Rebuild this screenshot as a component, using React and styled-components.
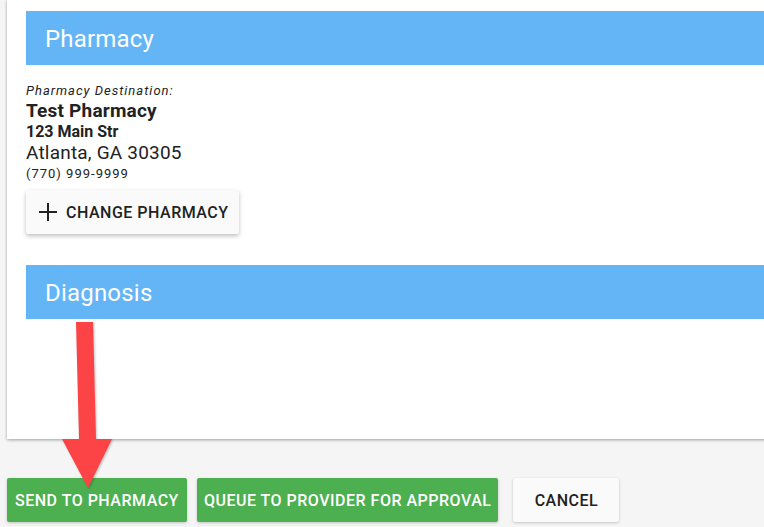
import styled, { createGlobalStyle } from "styled-components";

const GlobalStyle = createGlobalStyle`
  html, body {
    margin: 0;
    padding: 0;
    background: #f5f5f5;
    overflow: hidden;
    font-family: Roboto, "Liberation Sans", sans-serif;
  }
`;

export default function App() {
  return (
    <Page>
      <GlobalStyle />
      <Card>
        <SectionHeader>Pharmacy</SectionHeader>
        <Details>
          <Label>Pharmacy Destination:</Label>
          <Name>Test Pharmacy</Name>
          <Street>123 Main Str</Street>
          <City>Atlanta, GA 30305</City>
          <Phone>(770) 999-9999</Phone>
        </Details>
        <ChangeButton>
          <svg width="18" height="18" viewBox="0 0 18 18">
            <path d="M9 0v18M0 9h18" stroke="#222" strokeWidth="2" />
          </svg>
          Change Pharmacy
        </ChangeButton>
        <SectionHeader $spaced>Diagnosis</SectionHeader>
      </Card>
      <Actions>
        <ActionButton $primary $pad="8px">Send to Pharmacy</ActionButton>
        <ActionButton $primary>Queue to Provider for Approval</ActionButton>
        <ActionButton $gap="5px">Cancel</ActionButton>
      </Actions>
      <Arrow width="60" height="175" viewBox="0 0 60 175">
        <polygon
          points="14,0 31,0 34,117 50,117 26,166 0,117 17,117"
          fill="#fc4446"
        />
      </Arrow>
    </Page>
  );
}

const Page = styled.div`
  position: relative;
  width: 764px;
  height: 527px;
`;

const Card = styled.div`
  margin-left: 7px;
  width: 820px;
  height: 439px;
  box-sizing: border-box;
  padding: 11px 0 0 19px;
  background: #fff;
  box-shadow: 0 1px 3px rgba(0, 0, 0, 0.35);
`;

const SectionHeader = styled.div`
  height: 54px;
  box-sizing: border-box;
  margin-top: ${(p) => (p.$spaced ? "31px" : "0")};
  padding: 2px 0 0 19px;
  display: flex;
  align-items: center;
  background: #64b5f6;
  color: #fff;
  font-size: 24px;
  letter-spacing: 0.2px;
`;

const Details = styled.div`
  padding-top: 17px;
  color: #222;
`;

const Label = styled.div`
  font-size: 13px;
  font-style: italic;
  letter-spacing: 1px;
  line-height: 17px;
`;

const Name = styled.div`
  font-size: 19px;
  font-weight: 700;
  letter-spacing: 0.2px;
  line-height: 24px;
`;

const Street = styled.div`
  font-size: 16px;
  font-weight: 700;
  line-height: 18px;
`;

const City = styled.div`
  font-size: 19px;
  letter-spacing: 0.2px;
  line-height: 24px;
`;

const Phone = styled.div`
  font-size: 13px;
  letter-spacing: 1px;
  line-height: 18px;
`;

const ChangeButton = styled.button`
  margin-top: 7px;
  height: 44px;
  padding: 0 10px 0 13px;
  display: flex;
  align-items: center;
  gap: 9px;
  border: none;
  border-radius: 2px;
  background: #fafafa;
  box-shadow: 0 2px 4px rgba(0, 0, 0, 0.25);
  font-family: Roboto, "Liberation Sans", sans-serif;
  font-size: 16px;
  font-weight: 500;
  letter-spacing: 0.5px;
  text-transform: uppercase;
  color: #222;
`;

const Actions = styled.div`
  display: flex;
  gap: 10px;
  padding: 39px 0 0 7px;
`;

const ActionButton = styled.button`
  height: 44px;
  padding: 0 ${(p) => p.$pad || "7px"};
  margin-left: ${(p) => p.$gap || "0"};
  border: none;
  border-radius: 2px;
  background: ${(p) => (p.$primary ? "#4caf50" : "#fafafa")};
  color: ${(p) => (p.$primary ? "#fff" : "#222")};
  box-shadow: 0 1px 3px rgba(0, 0, 0, 0.2);
  font-family: Roboto, "Liberation Sans", sans-serif;
  font-size: 16px;
  font-weight: 500;
  letter-spacing: 0.5px;
  text-transform: uppercase;
  min-width: 106px;
`;

const Arrow = styled.svg`
  position: absolute;
  left: 62px;
  top: 322px;
  filter: drop-shadow(1px 1px 1px rgba(0, 0, 0, 0.25));
`;
